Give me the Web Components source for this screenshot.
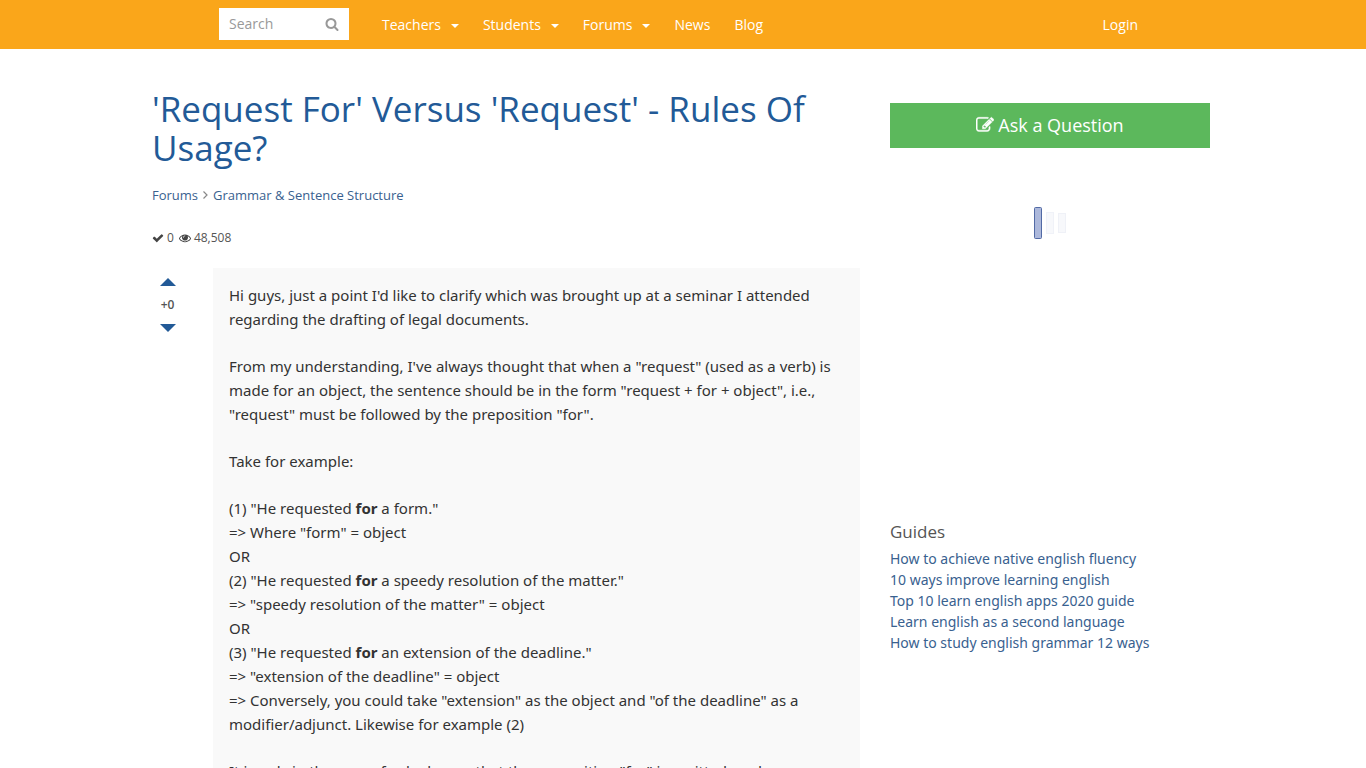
<!DOCTYPE html>
<html lang="en">
<head>
<meta charset="utf-8">
<title>'Request For' Versus 'Request' - Rules Of Usage?</title>
<style>
body { margin: 0; background: #fff; font-family: "Open Sans", "Noto Sans", sans-serif; font-size: 14px; color: #555; }
.layout { display: grid; grid-template-columns: minmax(0, 708px) 320px; gap: 30px; box-sizing: border-box; max-width: 1090px; margin: 0 auto; padding: 40px 18px 0 14px; }
</style>
</head>
<body>
<site-header>
  <nav-item href="#teachers" menu>Teachers</nav-item>
  <nav-item href="#students" menu>Students</nav-item>
  <nav-item href="#forums" menu>Forums</nav-item>
  <nav-item href="#news">News</nav-item>
  <nav-item href="#blog">Blog</nav-item>
  <nav-item slot="account" href="#login">Login</nav-item>
</site-header>
<div class="layout">
  <main>
    <thread-heading answers="0" views="48,508">'Request For' Versus 'Request' - Rules Of Usage?</thread-heading>
    <forum-post score="+0">
      <p>Hi guys, just a point I'd like to clarify which was brought up at a seminar I attended regarding the drafting of legal documents.</p>
      <p>From my understanding, I've always thought that when a "request" (used as a verb) is made for an object, the sentence should be in the form "request + for + object", i.e., "request" must be followed by the preposition "for".</p>
      <p>Take for example:</p>
      <p>(1) "He requested <b>for</b> a form."<br>=&gt; Where "form" = object<br>OR<br>(2) "He requested <b>for</b> a speedy resolution of the matter."<br>=&gt; "speedy resolution of the matter" = object<br>OR<br>(3) "He requested <b>for</b> an extension of the deadline."<br>=&gt; "extension of the deadline" = object<br>=&gt; Conversely, you could take "extension" as the object and "of the deadline" as a modifier/adjunct. Likewise for example (2)</p>
      <p>It is only in the case of sub-clauses that the preposition "for" is omitted, and</p>
    </forum-post>
  </main>
  <side-bar></side-bar>
</div>
<script>
class BaseElement extends HTMLElement {
  constructor() {
    super();
    this.attachShadow({ mode: 'open' });
  }
  connectedCallback() {
    this.shadowRoot.innerHTML = this.render();
  }
}

customElements.define('site-header', class extends BaseElement {
  render() {
    return `<style>
      :host { display: block; background: #faa61a; }
      header { display: flex; align-items: center; box-sizing: border-box; max-width: 1090px; height: 49px; margin: 0 auto; padding: 0 90px 0 81px; }
      form { display: flex; align-items: center; width: 130px; height: 32px; margin: 0 33px 1px 0; background: #fff; }
      input { flex: 1; min-width: 0; padding: 0 0 2px 10px; border: 0; background: none; outline: 0; font: 14px "Open Sans", sans-serif; color: #555; }
      input::placeholder { color: #999; opacity: 1; }
      button { display: flex; padding: 0; margin-right: 10px; border: 0; background: none; color: #999; }
      nav { display: flex; gap: 24px; margin-right: auto; }
    </style>
    <header>
      <form role="search">
        <input type="text" placeholder="Search" aria-label="Search">
        <button type="button" aria-label="Search"><svg width="14" height="14" viewBox="0 0 1792 1792" fill="currentColor"><path d="M1216 832q0-185-131.500-316.500t-316.500-131.500-316.500 131.500-131.500 316.500 131.500 316.500 316.500 131.500 316.500-131.500 131.500-316.500zm512 832q0 52-38 90t-90 38q-54 0-90-38l-343-342q-179 124-399 124-143 0-273.500-55.500t-225-150-150-225-55.500-273.500 55.500-273.500 150-225 225-150 273.500-55.500 273.500 55.500 225 150 150 225 55.500 273.500q0 220-124 399l343 343q37 37 37 90z"/></svg></button>
      </form>
      <nav><slot></slot></nav>
      <slot name="account"></slot>
    </header>`;
  }
});

customElements.define('nav-item', class extends BaseElement {
  render() {
    const caret = this.hasAttribute('menu') ? '<i></i>' : '';
    return `<style>
      :host { display: block; font-size: 14px; line-height: 20px; font-weight: 500; }
      a { display: flex; align-items: center; color: #fff; text-decoration: none; }
      i { margin: 2px 0 0 10px; border: solid transparent; border-width: 4px 4px 0; border-top-color: #fff; }
    </style>
    <a href="${this.getAttribute('href')}"><slot></slot>${caret}</a>`;
  }
});

customElements.define('thread-heading', class extends BaseElement {
  render() {
    return `<style>
      :host { display: block; }
      h1 { margin: 0; font-size: 35px; line-height: 39px; font-weight: 400; color: #225a97; }
      nav { display: flex; align-items: center; margin-top: 18px; font-size: 13px; line-height: 20px; }
      nav svg { margin: 0 5px; }
      a { color: #39618f; text-decoration: none; }
      .stats { display: flex; align-items: center; margin-top: 24px; font-size: 12px; line-height: 18px; color: #555; }
      .stats svg { margin-right: 3px; fill: #444; }
      .stats span { margin-right: 5px; }
    </style>
    <h1><slot></slot></h1>
    <nav aria-label="Breadcrumb">
      <a href="#forums">Forums</a>
      <svg width="5" height="8" viewBox="0 0 5 8" fill="none" stroke="#888" stroke-width="1.200"><path d="M.5.500L4 4 .5 7.500"/></svg>
      <a href="#grammar">Grammar &amp; Sentence Structure</a>
    </nav>
    <div class="stats">
      <svg width="12" height="12" viewBox="0 0 1792 1792"><path d="M1671 566q0 40-28 68l-724 724-136 136q-28 28-68 28t-68-28l-136-136-362-362q-28-28-28-68t28-68l136-136q28-28 68-28t68 28l294 295 656-657q28-28 68-28t68 28l136 136q28 28 28 68z"/></svg><span>${this.getAttribute('answers')}</span>
      <svg width="12" height="12" viewBox="0 0 1792 1792"><path d="M1664 960q-152-236-381-353 61 104 61 225 0 185-131.500 316.500t-316.500 131.500-316.500-131.500-131.500-316.500q0-121 61-225-229 117-381 353 133 205 333.500 326.500t434.500 121.500 434.500-121.500 333.500-326.500zm-720-384q0-20-14-34t-34-14q-125 0-214.500 89.500t-89.500 214.500q0 20 14 34t34 14 34-14 14-34q0-86 61-147t147-61q20 0 34-14t14-34zm848 384q0 34-20 69-140 230-376.500 368.500t-499.500 138.500-499.500-139-376.500-368q-20-35-20-69t20-69q140-229 376.500-368t499.500-139 499.500 139 376.500 368q20 35 20 69z"/></svg><span>${this.getAttribute('views')}</span>
    </div>`;
  }
});

customElements.define('forum-post', class extends BaseElement {
  render() {
    return `<style>
      :host { display: grid; grid-template-columns: 31px minmax(0, 1fr); gap: 30px; margin-top: 21px; }
      .votes { display: flex; flex-direction: column; align-items: center; padding-top: 10px; font-size: 12px; line-height: 18px; font-weight: 600; color: #555; }
      button { display: flex; padding: 0; border: 0; background: none; }
      .votes svg { display: block; fill: #225a97; }
      .votes span { margin: 10px 0; }
      article { padding: 15px 16px 24px; background: #f9f9f9; font-family: "Noto Sans", "Open Sans", sans-serif; font-size: 15px; line-height: 24px; color: #333; }
      ::slotted(p) { margin: 0 0 23px; }
    </style>
    <div class="votes">
      <button type="button" aria-label="Vote up"><svg width="16" height="8" viewBox="0 0 16 8"><path d="M0 8L8 0l8 8z"/></svg></button>
      <span>${this.getAttribute('score')}</span>
      <button type="button" aria-label="Vote down"><svg width="16" height="8" viewBox="0 0 16 8"><path d="M0 0h16L8 8z"/></svg></button>
    </div>
    <article><slot></slot></article>`;
  }
});

customElements.define('side-bar', class extends BaseElement {
  render() {
    return `<style>
      :host { display: block; padding-top: 14px; }
      .ask { display: flex; align-items: center; justify-content: center; gap: 4px; width: 100%; height: 45px; padding: 0 0 2px; border: 0; background: #5cb85c; color: #fff; font: 500 18px/24px "Open Sans", sans-serif; }
      .panel { display: flex; justify-content: center; align-items: flex-start; height: 313px; padding-top: 59px; }
      h2 { margin: 0 0 4px; font-size: 17px; line-height: 24px; font-weight: 400; color: #555; }
      ul { margin: 0; padding: 0; list-style: none; font-family: "Noto Sans", "Open Sans", sans-serif; font-size: 14px; line-height: 21px; }
      a { color: #39618f; text-decoration: none; }
    </style>
    <button class="ask" type="button"><svg width="18" height="18" viewBox="0 0 1792 1792" fill="currentColor" stroke="currentColor" stroke-width="40"><path d="M888 1184l116-116-152-152-116 116v56h96v96h56zm440-720q-16-16-33 1l-350 350q-17 17-1 33t33-1l350-350q17-17 1-33zm80 594v190q0 119-84.500 203.500t-203.500 84.500h-832q-119 0-203.500-84.500t-84.500-203.500v-832q0-119 84.500-203.500t203.500-84.500h832q63 0 117 25 15 7 18 23 3 17-9 29l-49 49q-14 14-32 8-23-6-45-6h-832q-66 0-113 47t-47 113v832q0 66 47 113t113 47h832q66 0 113-47t47-113v-126q0-13 9-22l64-64q15-15 35-7t20 29zm-96-738l288 288-672 672h-288v-288zm444 132l-92 92-288-288 92-92q28-28 68-28t68 28l152 152q28 28 28 68t-28 68z"/></svg>Ask a Question</button>
    <div class="panel" role="status" aria-label="Loading"><svg width="32" height="32" viewBox="0 0 32 32"><rect x=".5" y=".5" width="7" height="31" rx="1" fill="#acb8db" stroke="#526aa5"/><rect x="12.500" y="5.500" width="7" height="21" fill="#f7f8fb" stroke="#f0f2f8"/><rect x="24.500" y="6.500" width="7" height="19" fill="#f7f8fb" stroke="#eff1f7"/></svg></div>
    <h2>Guides</h2>
    <ul>
      <li><a href="#fluency">How to achieve native english fluency</a></li>
      <li><a href="#improve">10 ways improve learning english</a></li>
      <li><a href="#apps">Top 10 learn english apps 2020 guide</a></li>
      <li><a href="#second-language">Learn english as a second language</a></li>
      <li><a href="#grammar-ways">How to study english grammar 12 ways</a></li>
    </ul>`;
  }
});
</script>
</body>
</html>
